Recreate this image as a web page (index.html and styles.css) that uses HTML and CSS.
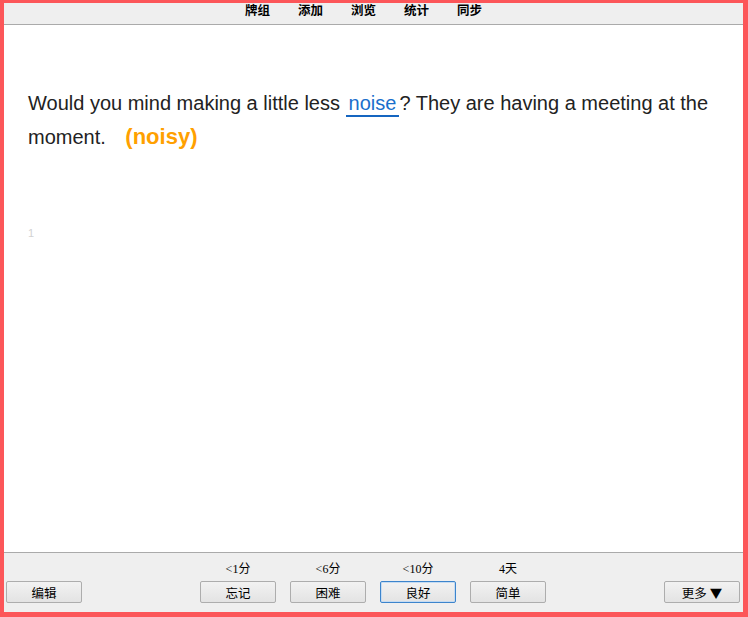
FILE: index.html
```html
<!DOCTYPE html>
<html lang="zh">
  <head>
    <meta charset="UTF-8" />
    <meta name="viewport" content="width=device-width, initial-scale=1.0" />
    <title>复习</title>
    <link rel="stylesheet" href="styles.css">
  </head>
  <body>
    <div class="frame">
      <div class="toolbar">
        <a href="#">牌组</a>
        <a href="#">添加</a>
        <a href="#">浏览</a>
        <a href="#">统计</a>
        <a href="#">同步</a>
      </div>

      <div class="card">
        <div class="question">
          Would you mind making a little less
          <span class="typed">noise</span>? They are having a meeting at the
          moment. <span class="hint">(noisy)</span>
        </div>
        <div class="card-num">1</div>
      </div>

      <div class="answer-bar">
        <div class="side">
          <button>编辑</button>
        </div>
        <div class="ease">
          <div class="ease-col">
            <span class="due">&lt;1分</span>
            <button>忘记</button>
          </div>
          <div class="ease-col">
            <span class="due">&lt;6分</span>
            <button>困难</button>
          </div>
          <div class="ease-col">
            <span class="due">&lt;10分</span>
            <button class="focus">良好</button>
          </div>
          <div class="ease-col">
            <span class="due">4天</span>
            <button>简单</button>
          </div>
        </div>
        <div class="side">
          <button>更多 ▼</button>
        </div>
      </div>
    </div>
  </body>
</html>
```

FILE: styles.css
```css
html, body {
  margin: 0;
  height: 100%;
}
body {
  font-family: "Liberation Sans", Arial, "Noto Sans CJK SC", sans-serif;
}
.frame {
  box-sizing: border-box;
  height: 617px;
  border-style: solid;
  border-color: #fc5659;
  border-width: 3px 5px 5px 4px;
  display: flex;
  flex-direction: column;
  background: #fff;
}
.toolbar {
  height: 21px;
  background: #efefef;
  border-bottom: 1px solid #aaa;
  display: flex;
  justify-content: center;
  gap: 28px;
  padding-right: 20px;
}
.toolbar a {
  font-family: "Noto Sans CJK SC", sans-serif;
  font-weight: bold;
  font-size: 12.5px;
  line-height: 14px;
  color: #000;
  text-decoration: none;
}
.card {
  flex: 1;
  padding: 62px 24px 0;
}
.question {
  font-size: 20px;
  line-height: 33px;
  color: #222;
}
.typed {
  display: inline-block;
  line-height: 24px;
  padding: 0 3px;
  color: #1a6fcc;
  border-bottom: 2px solid #1565c0;
}
.hint {
  margin-left: 14px;
  color: #ffa000;
  font-weight: bold;
  font-size: 22px;
}
.card-num {
  margin-top: 73px;
  font-size: 11px;
  color: #d2d2d2;
}
.answer-bar {
  box-sizing: border-box;
  height: 60px;
  background: #efefef;
  border-top: 1px solid #aaa;
  display: grid;
  grid-template-columns: 1fr auto 1fr;
  align-items: end;
  padding: 0 3px 9px 2px;
}
.side:last-child {
  text-align: right;
}
.ease {
  display: flex;
  gap: 14px;
}
.ease-col {
  display: flex;
  flex-direction: column;
  align-items: center;
  gap: 5px;
}
.due {
  font-family: "Liberation Serif", "Noto Sans CJK SC", serif;
  font-size: 12px;
  line-height: 14px;
  color: #000;
}
button {
  box-sizing: border-box;
  width: 76px;
  height: 22px;
  padding: 0;
  font-family: "Noto Sans CJK SC", sans-serif;
  font-size: 12.5px;
  color: #000;
  background: linear-gradient(#f2f2f2, #e3e3e3);
  border: 1px solid #adadad;
  border-radius: 2px;
}
button.focus {
  border-color: #3c84cc;
  box-shadow: inset 0 0 0 1px #c6dcf2;
}
```
